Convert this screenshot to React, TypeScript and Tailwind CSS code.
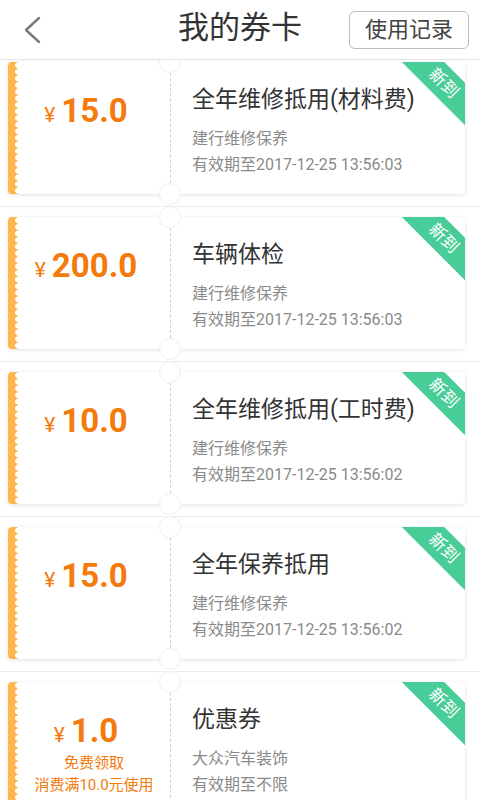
import React from 'react';

type Coupon = {
  amount: string;
  title: string;
  shop: string;
  expire: string;
  extra?: string[];
};

const coupons: Coupon[] = [
  { amount: '15.0', title: '全年维修抵用(材料费)', shop: '建行维修保养', expire: '有效期至2017-12-25 13:56:03' },
  { amount: '200.0', title: '车辆体检', shop: '建行维修保养', expire: '有效期至2017-12-25 13:56:03' },
  { amount: '10.0', title: '全年维修抵用(工时费)', shop: '建行维修保养', expire: '有效期至2017-12-25 13:56:02' },
  { amount: '15.0', title: '全年保养抵用', shop: '建行维修保养', expire: '有效期至2017-12-25 13:56:02' },
  { amount: '1.0', title: '优惠券', shop: '大众汽车装饰', expire: '有效期至不限', extra: ['免费领取', '消费满10.0元使用'] },
];

const font = { fontFamily: 'Roboto, "Noto Sans CJK SC", sans-serif' };

const CouponCard: React.FC<{ c: Coupon }> = ({ c }) => (
  <div className="relative ml-2 mr-[15px] h-[132px] rounded-[4px] bg-white shadow-[0_1px_4px_rgba(0,0,0,0.12)]">
    <div className="relative flex h-full overflow-hidden rounded-[4px]">
      {/* scalloped strip */}
      <div className="relative w-[10px] flex-none bg-[#ffb64c]">
        <div className="absolute inset-y-0 right-0 w-[6px] bg-[radial-gradient(circle_at_100%_50%,#fff_2.6px,transparent_3.2px)] bg-[length:6px_6.6px]" />
      </div>

      {/* amount */}
      <div className="flex w-[152px] flex-none flex-col items-center pt-[29px] text-[#f47a0c]">
        <div className="flex items-baseline pr-[16px] leading-[40px]">
          <span className="mr-[6px] text-[21px]">¥</span>
          <span className="text-[33px] font-bold">{c.amount}</span>
        </div>
        {c.extra && (
          <div className="-mt-[3px] flex flex-col items-center">
            {c.extra.map((t) => (
              <div key={t} className="text-[15px] leading-[22px]">{t}</div>
            ))}
          </div>
        )}
      </div>

      <div className="my-[11px] w-0 border-l border-dashed border-[#d0d0d0]" />

      {/* info */}
      <div className="flex-1 pl-[21px] pt-[23px]">
        <div className="text-[23px] leading-[30px] text-[#333]">{c.title}</div>
        <div className="mt-[11px] text-[16px] leading-[26px] text-[#8a8a8a]">{c.shop}</div>
        <div className="text-[16px] leading-[26px] text-[#8a8a8a]">{c.expire}</div>
      </div>

      {/* ribbon */}
      <div className="absolute right-[-31px] top-[6px] flex h-[30px] w-[104px] rotate-45 items-center justify-center bg-[#48cd98] text-[17px] leading-none text-white">
        新到
      </div>
    </div>

    {/* notches */}
    <div className="absolute left-[151px] top-[-11px] h-[22px] w-[22px] rounded-full border border-[#efefef] bg-white" />
    <div className="absolute bottom-[-11px] left-[151px] h-[22px] w-[22px] rounded-full border border-[#efefef] bg-white" />
  </div>
);

export default function App() {
  return (
    <div className="flex h-[800px] w-[480px] flex-col overflow-hidden bg-white" style={font}>
      <header className="relative z-10 flex h-[60px] flex-none items-center border-b border-[#e4e4e4] bg-white">
        <button className="ml-[22px] flex h-[30px] w-[22px] items-center">
          <svg width="20" height="28" viewBox="0 0 20 28" fill="none">
            <polyline points="17,2 4,14 17,26" stroke="#7a7a7a" strokeWidth="2.4" strokeLinecap="round" strokeLinejoin="round" />
          </svg>
        </button>
        <h1 className="absolute left-1/2 top-[8px] -translate-x-1/2 text-[31px] leading-[40px] text-[#333]">我的券卡</h1>
        <button className="ml-auto mr-[11px] h-[38px] w-[120px] rounded-[6px] border border-[#bdbdbd] text-[22px] leading-[36px] text-[#444]">
          使用记录
        </button>
      </header>

      <div className="flex-1 overflow-hidden">
        <div className="-mt-[8px]">
          {coupons.map((c, i) => (
            <div key={i} className="border-b border-[#ececec] pb-[12px] pt-[10px]">
              <CouponCard c={c} />
            </div>
          ))}
        </div>
      </div>
    </div>
  );
}
